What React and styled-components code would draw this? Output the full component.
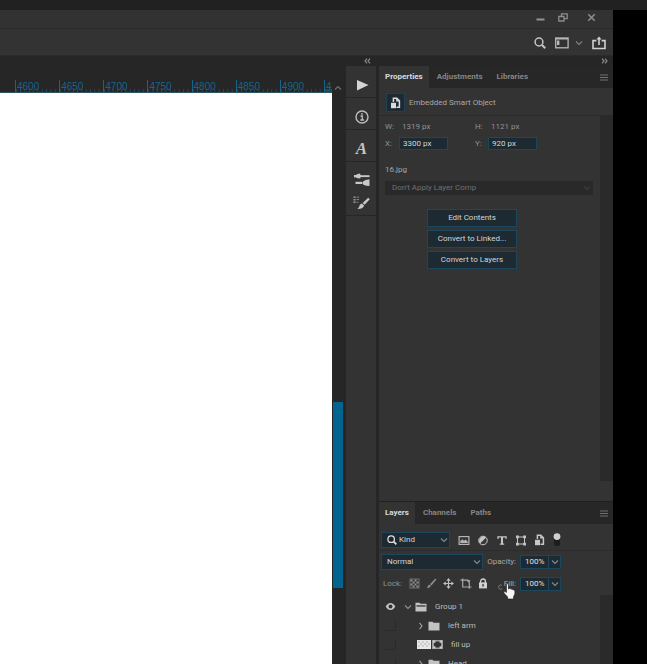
import React from "react";
import styled, { createGlobalStyle } from "styled-components";

const rulerMarks = ["4600", "4650", "4700", "4750", "4800", "4850", "4900"];

const Play = () => (
  <svg width="14" height="14" viewBox="0 0 14 14">
    <path d="M2 2 L13.5 7 L2 12.5 Z" fill="#d4d4d4" />
  </svg>
);

const Info = () => (
  <svg width="14" height="14" viewBox="0 0 14 14" fill="none" stroke="#bdbdbd">
    <circle cx="7" cy="7" r="6" strokeWidth="1.4" />
    <path d="M5.5 6 H7.3 V10 M5.3 10 H9" strokeWidth="1.3" />
    <circle cx="7" cy="3.8" r="0.9" fill="#bdbdbd" stroke="none" />
  </svg>
);

const Sliders = () => (
  <svg width="16" height="14" viewBox="0 0 16 14" fill="#c8c8c8">
    <rect x="0" y="2" width="3" height="2.4" />
    <path d="M2.5 1.2 L6 0.6 L7 3.2 L6 5.6 L2.5 5 Z" />
    <rect x="6" y="2.2" width="9.5" height="1.9" />
    <rect x="1.5" y="8.8" width="7" height="2.2" />
    <path d="M9 8.5 Q11 6.5 15.5 6.2 V13 Q12 13 9 11.4 Z" />
  </svg>
);

const Brushes = () => (
  <svg width="17" height="14" viewBox="0 0 17 14" fill="#c8c8c8">
    <path
      d="M0.5 0.5h2v1.4h-2z M0.5 3h2v1.4h-2z M0.5 5.5h2v1.4h-2z M3.5 0.8h2.6v0.8h-2.6z M3.5 3.3h2.6v0.8h-2.6z M3.5 5.8h2v0.8h-2z"
      fill="#9a9a9a"
    />
    <path d="M15.2 1.8 L16.8 3.2 L11.6 8.8 L9.6 7 Z" />
    <path d="M8.9 7.4 L11.1 9.5 Q10.2 13 4.4 13 Q6.4 11.6 6.6 9.6 Q7.2 7.6 8.9 7.4 Z" />
  </svg>
);

const Chevron = ({ dir = "down", color = "#7c8c95" }) => {
  const d = {
    down: "M1 2.5 L4 5.5 L7 2.5",
    right: "M2.5 0.8 L5 4 L2.5 7.2",
    up: "M1 5.5 L4 2.5 L7 5.5"
  };
  return (
    <svg width="8" height="8" viewBox="0 0 8 8">
      <path d={d[dir]} fill="none" stroke={color} strokeWidth="1.1" />
    </svg>
  );
};

const DoubleChevron = ({ flip }) => (
  <svg width="7" height="6" viewBox="0 0 7 6">
    <path
      d={
        flip
          ? "M3 0.7 L1 3 L3 5.3 M6 0.7 L4 3 L6 5.3"
          : "M1 0.7 L3 3 L1 5.3 M4 0.7 L6 3 L4 5.3"
      }
      fill="none"
      stroke="#8a8a8a"
      strokeWidth="1.2"
    />
  </svg>
);

const Search = ({ size = 12, color = "#c4c4c4" }) => (
  <svg width={size} height={size} viewBox="0 0 12 12" fill="none">
    <circle cx="5" cy="5" r="3.9" stroke={color} strokeWidth="1.5" />
    <path d="M8 8 L11.2 11.2" stroke={color} strokeWidth="2.1" />
  </svg>
);

const Workspace = () => (
  <svg width="14" height="12" viewBox="0 0 14 12">
    <rect x="0.7" y="1" width="12.4" height="9.8" fill="none" stroke="#b8b8b8" strokeWidth="1.3" />
    <path d="M1 1 H13 V2.6 H1 Z M2 3.6 H4.4 V8 H2 Z" fill="#b8b8b8" />
  </svg>
);

const Share = () => (
  <svg width="14" height="14" viewBox="0 0 14 14" fill="none" stroke="#d0d0d0" strokeWidth="1.6">
    <path d="M4.4 4.6 H1 V12.5 H13 V4.6 H9.6 M7 9 V2" />
    <path d="M4.4 3.6 L7 0.6 L9.6 3.6 Z" fill="#d0d0d0" stroke="none" />
  </svg>
);

const Minimize = () => (
  <svg width="9" height="9" viewBox="0 0 9 9">
    <path d="M0.5 6.5 H8.5" stroke="#949494" strokeWidth="2" />
  </svg>
);

const Restore = () => (
  <svg width="10" height="9" viewBox="0 0 10 9" fill="none" stroke="#8c8c8c" strokeWidth="1.3">
    <path d="M0.8 3.5 H6 V8 H0.8 Z M3.5 3.5 V0.8 H9.2 V5.6 H6" />
  </svg>
);

const Close = () => (
  <svg width="9" height="9" viewBox="0 0 9 9">
    <path d="M1.3 1.3 L7.7 7.7 M7.7 1.3 L1.3 7.7" stroke="#8c8c8c" strokeWidth="1.6" />
  </svg>
);

const MenuLines = () => (
  <svg width="8" height="7" viewBox="0 0 8 7">
    <path d="M0 1 H8 M0 3.5 H8 M0 6 H8" stroke="#717171" strokeWidth="1.2" />
  </svg>
);

const SmartObject = ({ color = "#c8c8c8" }) => (
  <svg width="11" height="12" viewBox="0 0 11 12">
    <path
      d="M3.4 5 V1.2 H6.8 L9.4 3.8 V10.2 H6.5"
      fill="none"
      stroke={color}
      strokeWidth="1.5"
    />
    <path d="M6.2 1.2 V4.4 H9.4 Z" fill={color} />
    <rect x="1" y="5.8" width="5" height="5.4" fill={color} />
  </svg>
);

const Picture = () => (
  <svg width="12" height="11" viewBox="0 0 12 11">
    <rect x="1.1" y="1.6" width="9.8" height="7.8" fill="none" stroke="#b4b4b4" strokeWidth="1.2" />
    <path d="M2.3 8 V6 L4.4 4.2 L6 5.8 L7.6 4.6 L9.7 6.6 V8 Z" fill="#b4b4b4" />
  </svg>
);

const HalfCircle = () => (
  <svg width="12" height="11" viewBox="0 0 12 11">
    <circle cx="6" cy="5.5" r="4.3" fill="#3a3a3a" stroke="#c8c8c8" />
    <path d="M9 2.5 A4.3 4.3 0 0 0 3 8.5 Z" fill="#c8c8c8" />
  </svg>
);

const TypeTool = () => (
  <svg width="12" height="11" viewBox="0 0 12 11" fill="none" stroke="#c4c4c4">
    <path d="M1.5 1.9 H10.5 M3.8 9.1 H8.2" strokeWidth="1.4" />
    <path d="M6 2 V9" strokeWidth="2" />
    <path d="M2 1.5 V4 M10 1.5 V4" strokeWidth="1.1" />
  </svg>
);

const Frame = ({ color = "#c4c4c4" }) => (
  <svg width="12" height="11" viewBox="0 0 12 11" fill={color}>
    <rect x="2.5" y="2" width="7" height="7" fill="none" stroke={color} />
    <path d="M1 0.6h2.8v2.6H1z M8.2 0.6H11v2.6H8.2z M1 7.8h2.8v2.6H1z M8.2 7.8H11v2.6H8.2z" />
  </svg>
);

const FilterSwitch = () => (
  <svg width="8" height="14" viewBox="0 0 8 14">
    <rect x="1" y="3" width="6" height="10" rx="2" fill="#1d1d1d" />
    <circle cx="4" cy="3.6" r="3.4" fill="#d0d0d0" />
  </svg>
);

const Checker = () => (
  <svg width="11" height="11" viewBox="0 0 11 11" fill="#8e8e8e">
    <rect x="1" y="1" width="9" height="9" fill="none" stroke="#707070" />
    <path d="M1.5 1.5h2v2h-2z M5.5 1.5h2v2h-2z M3.5 3.5h2v2h-2z M7.5 3.5h2v2h-2z M1.5 5.5h2v2h-2z M5.5 5.5h2v2h-2z M3.5 7.5h2v2h-2z M7.5 7.5h2v2h-2z" />
  </svg>
);

const PaintBrush = () => (
  <svg width="11" height="11" viewBox="0 0 11 11" fill="#909090">
    <path d="M9.4 0.6 L10.4 1.4 L5.4 7.4 L4 6.3 Z" />
    <path d="M3.5 6.7 L5 8 Q4 10 0.6 10.3 Q1.8 9 2 7.8 Q2.5 6.8 3.5 6.7 Z" />
  </svg>
);

const Move = () => (
  <svg width="11" height="11" viewBox="0 0 11 11" fill="#c0c0c0">
    <path d="M4.9 2 H6.1 V9 H4.9 Z M2 4.9 H9 V6.1 H2 Z" />
    <path d="M5.5 0 L7.6 2.8 H3.4 Z M5.5 11 L7.6 8.2 H3.4 Z M0 5.5 L2.8 3.4 V7.6 Z M11 5.5 L8.2 3.4 V7.6 Z" />
  </svg>
);

const Artboard = () => (
  <svg width="12" height="11" viewBox="0 0 12 11" fill="none" stroke="#a8a8a8" strokeWidth="1.2">
    <path d="M0.5 2.2 H7.5 M2.7 2.2 V9 H11.5 M9.3 5 V10.8 M2.7 0.4 V2 M7 2.2 L9.3 4.6" />
    <path d="M6.4 1.2 L10.4 2.4 L9.4 5 Z" fill="#a8a8a8" stroke="none" />
  </svg>
);

const Padlock = () => (
  <svg width="10" height="11" viewBox="0 0 10 11">
    <path d="M2.6 5 V3.4 A2.4 2.4 0 0 1 7.4 3.4 V5" fill="none" stroke="#d0d0d0" strokeWidth="1.3" />
    <rect x="1" y="4.4" width="8" height="6" fill="#d0d0d0" />
    <rect x="4.4" y="6" width="1.3" height="2.6" fill="#333" />
  </svg>
);

const Eye = () => (
  <svg width="11" height="9" viewBox="0 0 10 9">
    <path d="M0.2 4.5 Q2.2 1 5 1 T9.8 4.5 Q7.8 8 5 8 T0.2 4.5 Z" fill="#c8c8c8" />
    <circle cx="5" cy="4.5" r="2" fill="#333" />
  </svg>
);

const Folder = ({ open }) => (
  <svg width="12" height="10" viewBox="0 0 12 10">
    <path d="M0.5 0.8 H4.5 L5.5 1.8 H11.5 V9.6 H0.5 Z" fill="#c2c2c2" />
    {open && <path d="M1.5 3.3 H10.6 V4.6 H1.5 Z" fill="#333" />}
  </svg>
);

const Thumb = () => (
  <svg width="14" height="9" viewBox="0 0 14 9">
    <rect width="14" height="9" fill="#e8e8e8" />
    <path d="M1 1h2v2H1z M5 1h2v2H5z M9 1h2v2H9z M3 3h2v2H3z M7 3h2v2H7z M11 3h2v2h-2z M1 5h2v2H1z M5 5h2v2H5z M9 5h2v2H9z" fill="#cdcdcd" />
  </svg>
);

const VectorMask = () => (
  <svg width="11" height="9" viewBox="0 0 11 9">
    <rect width="11" height="9" fill="#9c9c9c" />
    <rect x="2" y="1.5" width="7" height="6" fill="#333" />
    <path d="M1 0.5h2.4v2.2H1z M7.6 0.5H10v2.2H7.6z M1 6.3h2.4v2.2H1z M7.6 6.3H10v2.2H7.6z" fill="#c8c8c8" />
  </svg>
);

// pointing hand with a small scrub ring on its left
const Hand = () => (
  <svg width="18" height="17" viewBox="-5 0 18 17">
    <path
      d="M-1 2.4 A2.2 2.2 0 1 0 -0.6 5.6"
      fill="none"
      stroke="#7a7a7a"
      strokeWidth="1"
    />
    <path
      d="M3.4 1.4 Q4.6 0.2 5.5 1.5 V6 L6.3 5.4 Q7.4 5 7.8 6.2 Q9.2 5.3 9.8 6.8 Q11.6 6.2 11.9 8 V11 L10.6 13.6 V16 H4.6 V14 L0.9 10 Q0.4 8.5 1.8 8.3 L3.4 9.4 Z"
      fill="#f6f6f6"
      stroke="#222"
      strokeWidth="0.7"
    />
  </svg>
);

const Tabs = ({ names, label }) => (
  <TabBar role="tablist" aria-label={label}>
    {names.map((name, i) => (
      <Tab key={name} role="tab" aria-selected={i === 0} $active={i === 0}>
        {name}
      </Tab>
    ))}
    <TabMenu aria-label={`${label} menu`}>
      <MenuLines />
    </TabMenu>
  </TabBar>
);

const Percent = ({ id, label, children }) => (
  <PercentGroup>
    <PercentLabel htmlFor={id}>
      {label}
      {children}
    </PercentLabel>
    <PercentBox>
      <PercentInput id={id} defaultValue="100%" />
      <PercentButton aria-label={`${label} slider`}>
        <Chevron />
      </PercentButton>
    </PercentBox>
  </PercentGroup>
);

const filters = [
  ["Pixel layers", Picture],
  ["Adjustment layers", HalfCircle],
  ["Type layers", TypeTool],
  ["Shape layers", Frame],
  ["Smart objects", SmartObject]
];

const locks = [
  ["Lock transparency", Checker],
  ["Lock pixels", PaintBrush],
  ["Lock position", Move],
  ["Lock artboard", Artboard],
  ["Lock all", Padlock]
];

const App = () => (
  <Screen>
    <GlobalStyle />
    <TopStrip />
    <AppWindow>
      <TitleBar>
        <IconButton aria-label="Minimize"><Minimize /></IconButton>
        <IconButton aria-label="Restore"><Restore /></IconButton>
        <IconButton aria-label="Close"><Close /></IconButton>
      </TitleBar>
      <OptionsBar>
        <IconButton aria-label="Search"><Search /></IconButton>
        <WorkspaceButton aria-label="Workspace">
          <Workspace />
          <Chevron color="#808080" />
        </WorkspaceButton>
        <IconButton aria-label="Share"><Share /></IconButton>
      </OptionsBar>
      <Body>
        <Document>
          <Ruler>
            {rulerMarks.map(mark => (
              <Mark key={mark}>{mark}</Mark>
            ))}
            <LastMark>4</LastMark>
          </Ruler>
          <Canvas />
        </Document>
        <ScrollColumn>
          <Chevron dir="up" color="#707070" />
          <ScrollThumb />
        </ScrollColumn>
        <Rail>
          <CollapseBar><DoubleChevron flip /></CollapseBar>
          <RailGroup><IconButton aria-label="Actions"><Play /></IconButton></RailGroup>
          <RailGroup><IconButton aria-label="Info"><Info /></IconButton></RailGroup>
          <RailGroup><GlyphButton>A</GlyphButton></RailGroup>
          <RailGroup $tall>
            <IconButton aria-label="Brush settings"><Sliders /></IconButton>
            <IconButton aria-label="Brushes"><Brushes /></IconButton>
          </RailGroup>
          <RailRest />
        </Rail>
        <Panels>
          <CollapseBar><DoubleChevron /></CollapseBar>
          <PropertiesPanel>
            <Tabs label="Properties panel" names={["Properties", "Adjustments", "Libraries"]} />
            <ObjectHeader>
              <ObjectIcon><SmartObject color="#dcdcdc" /></ObjectIcon>
              Embedded Smart Object
            </ObjectHeader>
            <PanelBody>
              <Properties>
                <Dimensions>
                  <span>W:</span>
                  <Value>1319 px</Value>
                  <span>H:</span>
                  <Value>1121 px</Value>
                  <label htmlFor="x">X:</label>
                  <DimInput id="x" defaultValue="3300 px" />
                  <label htmlFor="y">Y:</label>
                  <DimInput id="y" defaultValue="920 px" />
                </Dimensions>
                <FileName>16.jpg</FileName>
                <CompBox>
                  <Select aria-label="Layer comp" disabled>
                    <option>Don't Apply Layer Comp</option>
                  </Select>
                  <Chevron color="#3c3c3c" />
                </CompBox>
                <Actions>
                  <ActionButton>Edit Contents</ActionButton>
                  <ActionButton>Convert to Linked...</ActionButton>
                  <ActionButton>Convert to Layers</ActionButton>
                </Actions>
              </Properties>
              <PanelScroll $end />
            </PanelBody>
          </PropertiesPanel>
          <LayersPanel>
            <Tabs label="Layers panel" names={["Layers", "Channels", "Paths"]} />
            <FilterRow>
              <SelectBox $width={69}>
                <Search size={10} color="#e0e0e0" />
                <Select aria-label="Filter type"><option>Kind</option></Select>
                <Chevron />
              </SelectBox>
              <FilterIcons>
                {filters.map(([name, Icon]) => (
                  <IconButton key={name} aria-label={name}><Icon /></IconButton>
                ))}
              </FilterIcons>
              <IconButton aria-label="Filtering"><FilterSwitch /></IconButton>
            </FilterRow>
            <BlendRow>
              <SelectBox $width={102}>
                <Select aria-label="Blend mode"><option>Normal</option></Select>
                <Chevron />
              </SelectBox>
              <Percent id="opacity" label="Opacity:" />
            </BlendRow>
            <LockRow>
              <LockLabel>Lock:</LockLabel>
              <LockIcons>
                {locks.map(([name, Icon]) => (
                  <IconButton key={name} aria-label={name}><Icon /></IconButton>
                ))}
              </LockIcons>
              <Percent id="fill" label="Fill:">
                <Cursor><Hand /></Cursor>
              </Percent>
            </LockRow>
            <PanelBody>
              <LayerList>
                <Layer>
                  <Visibility aria-label="Hide Group 1"><Eye /></Visibility>
                  <Chevron color="#909090" />
                  <Folder open />
                  <LayerName>Group 1</LayerName>
                </Layer>
                <Layer $nested>
                  <Visibility $empty aria-label="Show left arm" />
                  <Chevron dir="right" color="#a0a0a0" />
                  <Folder />
                  <LayerName>left arm</LayerName>
                </Layer>
                <Layer $nested>
                  <Visibility $empty aria-label="Show fill up" />
                  <Thumbs><Thumb /><VectorMask /></Thumbs>
                  <LayerName>fill up</LayerName>
                </Layer>
                <Layer $nested>
                  <Visibility $empty aria-label="Show Head" />
                  <Chevron dir="right" color="#a0a0a0" />
                  <Folder />
                  <LayerName>Head</LayerName>
                </Layer>
              </LayerList>
              <PanelScroll />
            </PanelBody>
          </LayersPanel>
        </Panels>
      </Body>
    </AppWindow>
  </Screen>
);

const GlobalStyle = createGlobalStyle`
  * {
    box-sizing: border-box;
  }

  body {
    margin: 0;
    background: #000;
    color: #a8a8a8;
    font-family: Roboto, "Open Sans", sans-serif;
    font-size: 8px;
    line-height: 12px;
  }

  button, input, select {
    margin: 0;
    padding: 0;
    border: 0;
    border-radius: 0;
    background: none;
    color: inherit;
    font: inherit;
  }

  svg {
    display: block;
    flex-shrink: 0;
  }
`;

const Screen = styled.div`
  display: flex;
  flex-direction: column;
  height: 100vh;
  overflow: hidden;
`;

const TopStrip = styled.div`
  flex: 0 0 10px;
  background: #212121;
`;

const AppWindow = styled.div`
  flex: 1;
  min-height: 0;
  margin-right: 34px;
  display: flex;
  flex-direction: column;
  background: #262626;
`;

const TitleBar = styled.header`
  display: flex;
  align-items: center;
  justify-content: flex-end;
  gap: 13px;
  height: 19px;
  padding: 0 17px 3px 0;
  background: #323232;
  border-bottom: 1px solid #292929;

  button:last-child {
    margin-left: 6px;
  }
`;

const OptionsBar = styled.div`
  display: flex;
  align-items: center;
  justify-content: flex-end;
  gap: 9px;
  height: 27px;
  padding: 2px 7px 0 0;
  background: #333;
  border-bottom: 1px solid #2b2b2b;
`;

const IconButton = styled.button`
  display: flex;
  align-items: center;
  justify-content: center;
`;

const WorkspaceButton = styled(IconButton)`
  gap: 6px;
`;

const Body = styled.div`
  flex: 1;
  min-height: 0;
  display: grid;
  grid-template-columns: 1fr 14px 30px 237px;
`;

const Document = styled.main`
  display: flex;
  flex-direction: column;
  min-width: 0;
  padding-top: 24px;
`;

const Ruler = styled.div`
  display: flex;
  height: 13px;
  padding-left: 15px;
  overflow: hidden;
  border-bottom: 1px solid #2f5264;
`;

const Mark = styled.div`
  flex: 1;
  min-width: 0;
  padding-left: 1px;
  border-left: 1px solid #176489;
  background: linear-gradient(to right, #1d4d64 1px, transparent 1px) left bottom / 10% 3px repeat-x;
  color: #14658d;
  font: 10px/14px "Liberation Sans", sans-serif;
`;

const LastMark = styled(Mark)`
  flex: 0 0 8px;
`;

const Canvas = styled.div`
  flex: 1;
  background: #fff;
`;

const ScrollColumn = styled.div`
  display: flex;
  flex-direction: column;
  align-items: center;
  justify-content: space-between;
  padding: 28px 2px 76px 0;
`;

const ScrollThumb = styled.div`
  width: 10px;
  height: 186px;
  background: #03648f;
`;

const Rail = styled.aside`
  display: flex;
  flex-direction: column;
`;

const CollapseBar = styled.div`
  display: flex;
  flex: 0 0 10px;
  align-items: center;
  justify-content: flex-end;
  padding-right: 5px;
`;

const RailGroup = styled.div`
  display: flex;
  flex-direction: column;
  align-items: center;
  justify-content: center;
  gap: ${props => (props.$tall ? "9px" : "0")};
  height: ${props => (props.$tall ? "54px" : "32px")};
  padding: 6px 0 0 1px;
  background: #333;
  border-bottom: 1px solid #262626;
`;

const GlyphButton = styled.button`
  color: #c4c4c4;
  font: italic bold 17px/20px "Liberation Serif", serif;
`;

const RailRest = styled.div`
  flex: 1;
  background: #333;
`;

const Panels = styled.aside`
  display: flex;
  flex-direction: column;
  min-height: 0;
  padding-left: 3px;
`;

const Panel = styled.section`
  display: flex;
  flex-direction: column;
  min-height: 0;
  background: #333;
`;

const PropertiesPanel = styled(Panel)`
  flex: 1;
`;

const LayersPanel = styled(Panel)`
  flex: 0 0 163px;
  border-top: 1px solid #202020;
  overflow: hidden;
`;

const TabBar = styled.div`
  display: flex;
  flex: 0 0 22px;
  background: #272727;
`;

const Tab = styled.button`
  padding: 0 6px;
  margin-right: 2px;
  background: ${props => (props.$active ? "#333" : "transparent")};
  color: ${props => (props.$active ? "#dadada" : "#858585")};
  font-weight: bold;
`;

const TabMenu = styled(IconButton)`
  margin-left: auto;
  padding-right: 5px;
`;

const ObjectHeader = styled.div`
  display: flex;
  flex: 0 0 28px;
  align-items: center;
  gap: 4px;
  padding: 2px 0 0 7px;
  border-bottom: 1px solid #2a2a2a;
`;

const ObjectIcon = styled.div`
  display: flex;
  align-items: center;
  justify-content: center;
  width: 19px;
  height: 19px;
  background: #1e2a32;
  border: 1px solid #1d4254;
`;

const PanelBody = styled.div`
  flex: 1;
  min-height: 0;
  display: flex;
`;

const PanelScroll = styled.div`
  flex: 0 0 13px;
  margin-bottom: ${props => (props.$end ? "20px" : "0")};
  background: #2a2a2a;
`;

const Properties = styled.div`
  flex: 1;
  padding: 4px 7px 0 6px;
`;

const Dimensions = styled.div`
  display: grid;
  grid-template-columns: 14px 76px 13px 49px;
  grid-auto-rows: 13px;
  row-gap: 4px;
  align-items: center;
  color: #929292;
`;

const Value = styled.span`
  padding-left: 3px;
`;

const DimInput = styled.input`
  width: 49px;
  height: 13px;
  padding-left: 3px;
  background: #1e2a32;
  border: 1px solid #1b485e;
  color: #d6d6d6;
`;

const FileName = styled.div`
  margin-top: 14px;
`;

const Select = styled.select`
  flex: 1;
  min-width: 0;
  appearance: none;
  opacity: 1;
`;

const CompBox = styled.div`
  display: flex;
  align-items: center;
  height: 14px;
  margin-top: 5px;
  padding: 0 2px 0 7px;
  background: #292929;
  color: #707070;
`;

const Actions = styled.div`
  display: flex;
  flex-direction: column;
  align-items: center;
  gap: 3px;
  margin-top: 14px;
  padding-right: 34px;
`;

const ActionButton = styled.button`
  width: 90px;
  height: 18px;
  background: #1e2a32;
  border: 1px solid #1b485e;
  color: #d6d6d6;
`;

const ControlRow = styled.div`
  display: flex;
  align-items: center;
  padding: 0 4px 0 2px;
`;

const FilterRow = styled(ControlRow)`
  flex: 0 0 27px;
  padding-top: 6px;
  border-bottom: 1px solid #2c2c2c;
`;

const BlendRow = styled(ControlRow)`
  flex: 0 0 21px;
`;

const LockRow = styled(ControlRow)`
  flex: 0 0 23px;
`;

const SelectBox = styled.div`
  display: flex;
  align-items: center;
  gap: 2px;
  width: ${props => props.$width}px;
  height: 16px;
  padding: 0 1px 0 5px;
  background: #1e2a32;
  border: 1px solid #1b485e;
  color: #d6d6d6;
`;

const FilterIcons = styled.div`
  display: flex;
  gap: 7px;
  margin: 0 8px;
`;

const LockLabel = styled.span`
  width: 28px;
  padding-left: 2px;
  color: #929292;
`;

const LockIcons = styled.div`
  display: flex;
  gap: 6px;
`;

const PercentGroup = styled.div`
  display: flex;
  align-items: center;
  justify-content: flex-end;
  gap: 4px;
  margin-left: auto;
  margin-right: 48px;
`;

const PercentLabel = styled.label`
  position: relative;
`;

const PercentBox = styled.div`
  display: flex;
  height: 14px;
  background: #1e2a32;
  border: 1px solid #1b485e;
`;

const PercentInput = styled.input`
  width: 27px;
  padding-left: 4px;
  color: #e0e0e0;
`;

const PercentButton = styled(IconButton)`
  width: 12px;
  border-left: 1px solid #1b485e;
`;

const Cursor = styled.span`
  position: absolute;
  right: 0;
  top: 5px;
`;

const LayerList = styled.ul`
  flex: 1;
  margin: 0;
  padding: 2px 0 0 6px;
  list-style: none;
`;

const Layer = styled.li`
  display: flex;
  align-items: center;
  gap: 3px;
  height: 19px;
  color: #bcbcbc;

  > :nth-child(2) {
    margin-left: ${props => (props.$nested ? "18px" : "5px")};
  }
`;

const Visibility = styled(IconButton)`
  width: 11px;
  height: 11px;
  border: solid #2a2a2a;
  border-width: ${props => (props.$empty ? "0 1px 1px 0" : "0")};
`;

const Thumbs = styled.span`
  display: flex;
  gap: 1px;
`;

const LayerName = styled.span`
  margin-left: 5px;
`;

export default App;
